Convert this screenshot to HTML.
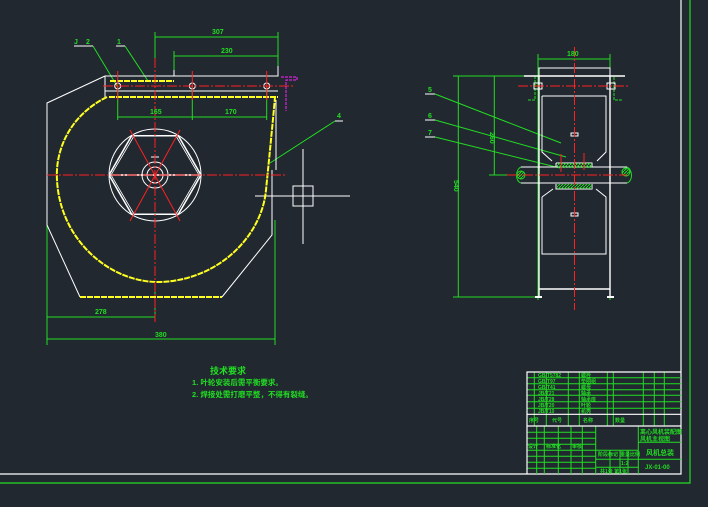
<!DOCTYPE html>
<html><head><meta charset="utf-8"><style>
html,body{margin:0;padding:0;background:#212830;width:708px;height:507px;overflow:hidden}
svg{display:block}
text{font-family:"Liberation Sans","Noto Sans CJK SC",sans-serif;font-weight:bold}
</style></head><body>
<svg width="708" height="507" viewBox="0 0 708 507" xmlns="http://www.w3.org/2000/svg">
<defs>
<pattern id="h" width="3" height="3" patternUnits="userSpaceOnUse"><path d="M0 3L3 0" stroke="#22dd22" stroke-width="1"/></pattern>
</defs>
<rect width="708" height="507" fill="#212830"/>
<path d="M0 474H681V0" fill="none" stroke="#fff" stroke-width="1.2"/>
<path d="M0 483H690V0" fill="none" stroke="#22dd22" stroke-width="1.2"/>

<g fill="none" stroke-width="1">
<g stroke="#22dd22">
<path d="M155 32V58M278 32V72M174 51V70M155 37H278M174 56H278"/>
<path d="M117.7 86V120M192.3 86V120M266.7 86V120M117.7 117H266.7"/>
<path d="M47 225V345M155 290V322M275 220V345M47 317H155M47 339H275"/>
<path d="M93 46L117 86M125 46L148 81M270 163L335 121"/>
</g>
<g stroke="#fff">
<path d="M74 46H93M116 46H125M335 121H343"/>
<path d="M105 76H174V70M174 76H278V66M105 91H278M105 76V97"/>
<path d="M105 76L47 103V225L80 297M222 297L272 235V170M276 100V170"/>
<ellipse cx="155" cy="175" rx="46" ry="46"/>
<path d="M109 175H201M131.7 135.7H178.3M131.7 214.3H178.3M131.7 135.7L109 175L131.7 214.3M178.3 135.7L201 175L178.3 214.3" stroke-width="1.5"/>
<path d="M134 136L111 175L134 214M176 136L199 175L176 214" stroke-width="0.8"/>
<circle cx="155" cy="175" r="13"/><circle cx="155" cy="175" r="8"/>
<path d="M151 157H159M155 157V163"/>
<path d="M255 196H350M303 149V244"/><rect x="293" y="186" width="20" height="20"/>
<circle cx="117.7" cy="86" r="3"/><circle cx="192.3" cy="86" r="3"/><circle cx="266.7" cy="86" r="3"/>
</g>
<g stroke="#ffff22" stroke-width="2" stroke-dasharray="6 1">
<path d="M109 97H278M110 81H174M80 297H222"/>
<path d="M107 97C70 115 55 150 57 180C60 240 110 283 160 282C220 280 262 235 266 190C270 150 273 120 275 97"/>
</g>
<g stroke="#ff2020" stroke-dasharray="10 2 2 2">
<path d="M103 86H293M47 175H285M155 58V322"/>
</g>
<g stroke="#ff2020">
<path d="M117.7 71V100M192.3 71V100M266.7 71V100"/>
<path d="M130 130L180 221M180 130L130 221"/>
</g>
<path d="M281 77H297V80H286V111" stroke="#ff22ff" stroke-dasharray="3 1"/>
</g>
<g fill="#22dd22" font-size="7">
<text x="74" y="44">J</text><text x="86" y="44">2</text><text x="117" y="44">1</text><text x="337" y="118">4</text>
<text x="212" y="34">307</text><text x="221" y="53">230</text>
<text x="150" y="114">165</text><text x="225" y="114">170</text>
<text x="95" y="314">278</text><text x="155" y="337">380</text>
</g>

<g fill="none" stroke-width="1">
<g stroke="#22dd22">
<path d="M538 54V300M610 54V300M538 59H610"/>
<path d="M453 76H538M453 297H538M458.3 76V297M494.3 76V175M489 175H520"/>
<path d="M435 94L561 143M435 120L566 157M435 137L560 168"/>
<path d="M521 167C515 170 515 181 521 183M627 167C633 170 633 181 627 183"/>
<path d="M523 76H535V100H527M625 76H614V100H622" stroke-dasharray="3 1"/>
</g>
<g stroke="#fff">
<path d="M425 94H435M425 120H435M425 137H435"/>
<rect x="539" y="68" width="71" height="8"/>
<path d="M524 76H625" stroke-width="1.6"/>
<path d="M539 76V297M610 76V297M539 289H610" stroke-width="1.4"/>
<path d="M542 96H606V152L597 161M542 96V152L552 161"/>
<path d="M542 197V254H606V197L596 189M542 197L553 189"/>
<path d="M521 167H627M521 183H627"/>
<path d="M556 163H592V167M556 163V167M556 184V189H592V184"/>
<rect x="571" y="133" width="7" height="3"/><rect x="571" y="213" width="7" height="3"/>
<path d="M535 297H542M607 297H614" stroke-width="2"/>
<rect x="534" y="83" width="8" height="6"/><rect x="607" y="83" width="8" height="6"/>
</g>
<rect x="557" y="163" width="35" height="5" fill="url(#h)" stroke="none"/>
<rect x="557" y="184" width="35" height="5" fill="url(#h)" stroke="none"/>
<circle cx="521" cy="175" r="4" fill="url(#h)" stroke="#22dd22"/>
<circle cx="626" cy="172" r="4" fill="url(#h)" stroke="#22dd22"/>
<g stroke="#ff2020" stroke-dasharray="10 2 2 2"><path d="M574.5 47V310M507 175H627M518 86H628"/></g>
<path d="M561 154V172M584 153V170" stroke="#ff2020"/>
</g>
<g fill="#22dd22" font-size="7">
<text x="567" y="56">180</text><text x="428" y="92">5</text><text x="428" y="118">6</text><text x="428" y="135">7</text>
<text x="0" y="0" transform="translate(490 132) rotate(90)">260</text>
<text x="0" y="0" transform="translate(454 180) rotate(90)">540</text>
</g>

<g fill="#22dd22">
<text x="210" y="374" font-size="9">技术要求</text>
<text x="192" y="385" font-size="7.5">1. 叶轮安装后需平衡要求。</text>
<text x="192" y="397" font-size="7.5">2. 焊接处需打磨平整，不得有裂缝。</text>
</g>

<g fill="none" stroke="#22dd22" stroke-width="1">
<path d="M527 377.7H681M527 383.7H681M527 389.7H681M527 395.3H681M527 401.7H681M527 408.3H681"/>
<path d="M534.3 372V426M546.3 372V426M568.3 372V426M579.3 372V426M607.3 372V426M613.3 372V426M643.3 372V426M654.3 372V426M664.3 372V426"/>
<path d="M595.7 426V474M638.3 426V474M638 442.3H681M638 459.3H681M595.7 450.3H638.3M595.7 459.3H638.3M595.7 467.3H638.3"/>
<path d="M527 432.3H595.7M527 438.3H595.7M527 444.3H595.7M527 450.3H595.7M527 456.3H595.7M527 462.3H595.7M527 468.3H595.7"/>
<path d="M536.7 426V474M544.3 426V474M558.3 426V474M571 426V474M582.3 426V474"/>
<path d="M610 450V474M620 450V474M628 450V474"/>
</g>
<path d="M527 474V372H681M527 414.3H681M527 426H681" fill="none" stroke="#fff" stroke-width="1.2"/>
<g fill="#22dd22" font-size="5">
<text x="538" y="377">GB/T5782</text><text x="581" y="377">螺栓</text>
<text x="538" y="383">GB/T97</text><text x="581" y="383">垫圈组</text>
<text x="538" y="389">GB/T41</text><text x="581" y="389">螺母</text>
<text x="538" y="395">JB/T21</text><text x="581" y="395">轴承</text>
<text x="538" y="401">JB/T28</text><text x="581" y="401">轴承座</text>
<text x="538" y="407">JB/T20</text><text x="581" y="407">叶轮</text>
<text x="538" y="413">JB/T10</text><text x="581" y="413">机壳</text>
<text x="529" y="422">序号</text><text x="552" y="422">代号</text><text x="583" y="422">名称</text><text x="615" y="422">数量</text>
<text x="640" y="434" font-size="6">离心风机装配图</text>
<text x="640" y="441" font-size="6">风机主视图</text>
<text x="646" y="455" font-size="7">风机总装</text>
<text x="645" y="469" font-size="6">JX-01-00</text>
<text x="528" y="448">设计</text><text x="546" y="448">标准化</text><text x="572" y="448">审核</text>
<text x="598" y="456">阶段标记</text><text x="620" y="456">重量</text><text x="630" y="456">比例</text>
<text x="621" y="465">1:2</text><text x="600" y="473">共1张 第1张</text>
</g>
</svg>
</body></html>
